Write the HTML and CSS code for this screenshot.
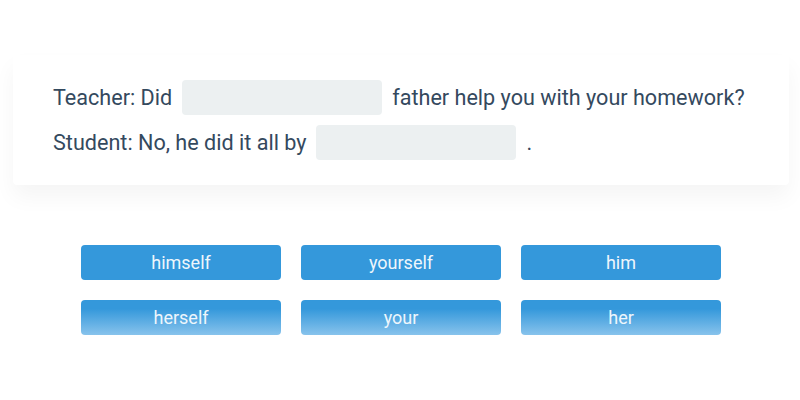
FILE: index.html
```html
<!DOCTYPE html>
<html>
<head>
<meta charset="utf-8">
<link rel="stylesheet" href="styles.css">
</head>
<body>
<div class="card">
  <div class="line">
    <span class="txt">Teacher: Did</span>
    <span class="blank"></span>
    <span class="txt">father help you with your homework?</span>
  </div>
  <div class="line">
    <span class="txt">Student: No, he did it all by</span>
    <span class="blank"></span>
    <span class="txt">.</span>
  </div>
</div>
<div class="options">
  <div class="opt">himself</div>
  <div class="opt">yourself</div>
  <div class="opt">him</div>
  <div class="opt fade">herself</div>
  <div class="opt fade">your</div>
  <div class="opt fade">her</div>
</div>
</body>
</html>
```
FILE: styles.css
```css
html, body {
  margin: 0;
  padding: 0;
  background: #ffffff;
  font-family: Roboto, "Liberation Sans", sans-serif;
}
.card {
  margin: 55px 0 0 13px;
  width: 776px;
  box-sizing: border-box;
  padding: 25px 40px;
  background: #ffffff;
  border-radius: 4px;
  box-shadow: 0 12px 22px rgba(0, 0, 0, 0.045);
  display: flex;
  flex-direction: column;
  gap: 10px;
}
.line {
  display: flex;
  align-items: center;
  height: 35px;
  gap: 10px;
  color: #34495e;
  font-size: 21.6px;
  white-space: nowrap;
}
.txt {
  flex-shrink: 0;
}
.blank {
  flex-shrink: 0;
  width: 200px;
  height: 35px;
  border-radius: 4px;
  background: #ecf0f1;
}
.options {
  margin: 60px 0 0 81px;
  display: grid;
  grid-template-columns: repeat(3, 200px);
  column-gap: 20px;
  row-gap: 20px;
}
.opt {
  height: 35px;
  border-radius: 4px;
  background: #3498db;
  color: #eef6fc;
  font-size: 18px;
  display: flex;
  align-items: center;
  justify-content: center;
}
.opt.fade {
  background: linear-gradient(to bottom, #3498db 25%, #88c3ec 100%);
}
```
